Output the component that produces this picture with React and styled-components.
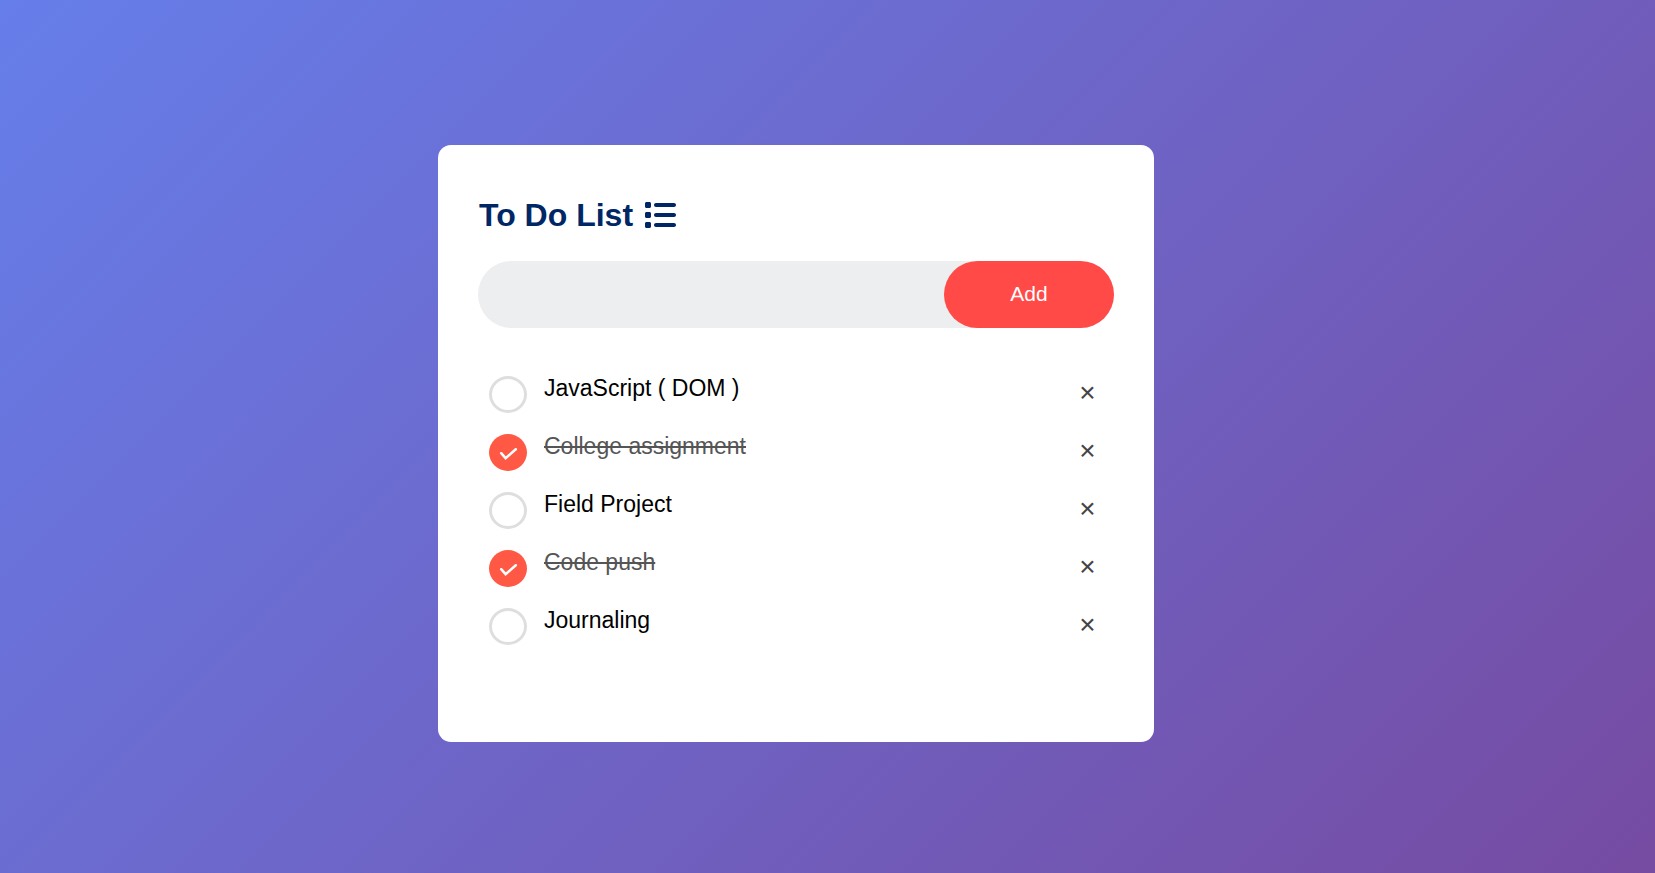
import React, { useState } from "react";
import styled, { createGlobalStyle } from "styled-components";
import { FaList } from "react-icons/fa6";

const GlobalStyle = createGlobalStyle`
  * {
    box-sizing: border-box;
  }
  body {
    margin: 0;
    font-family: Arial, "Liberation Sans", sans-serif;
  }
`;

const Page = styled.main`
  min-height: 100vh;
  padding: 145px 63px 120px 0;
  background: linear-gradient(135deg, #667eea, #764ba2);
`;

const Card = styled.section`
  width: 100%;
  max-width: 716px;
  margin: 0 auto;
  padding: 52px 40px 87px;
  background: #fff;
  border-radius: 13px;
`;

const Heading = styled.h1`
  display: flex;
  align-items: center;
  gap: 11px;
  margin: 0 0 28px;
  padding-left: 1px;
  color: #002765;
  font-size: 32px;
  line-height: 36px;
`;

const ListIcon = styled(FaList)`
  width: 32px;
  height: 32px;
`;

const AddForm = styled.form`
  display: flex;
  height: 67px;
  margin-bottom: 37px;
  background: #edeef0;
  border-radius: 40px;
`;

const TaskInput = styled.input`
  flex: 1;
  min-width: 0;
  padding: 0 27px;
  border: 0;
  outline: 0;
  background: transparent;
  font: inherit;
  font-size: 19px;
`;

const AddButton = styled.button`
  width: 170px;
  padding: 0 0 2px;
  border: 0;
  border-radius: 40px;
  background: #ff4a47;
  color: #fff;
  font: inherit;
  font-size: 21px;
  cursor: pointer;
`;

const TaskList = styled.ul`
  margin: 0;
  padding: 0;
  list-style: none;
`;

const TaskRow = styled.li`
  display: flex;
  align-items: center;
  height: 58px;
  padding: 0 11px;
`;

const TaskLabel = styled.label`
  display: flex;
  flex: 1;
  gap: 17px;
  cursor: pointer;
`;

const Tick = styled.span`
  display: grid;
  place-items: center;
  width: 38px;
  height: 37px;
  border: ${(p) => (p.$done ? "0" : "3px solid #dedede")};
  border-radius: 50%;
  background: ${(p) => (p.$done ? "#ff5945" : "#fff")};
`;

const TickBox = styled.input`
  appearance: none;
  width: 0;
  height: 0;
  margin: 0;
  grid-area: 1 / 1;
`;

const TickMark = styled.svg`
  grid-area: 1 / 1;
  width: 38px;
  height: 37px;
`;

const TaskText = styled.span`
  color: ${(p) => (p.$done ? "#555" : "#000")};
  font-size: 23px;
  line-height: 24px;
  text-decoration: ${(p) => (p.$done ? "line-through" : "none")};
`;

const RemoveButton = styled.button`
  width: 31px;
  height: 32px;
  padding: 0 0 2px;
  border: 0;
  background: transparent;
  color: #444;
  font: inherit;
  font-size: 28px;
  line-height: 30px;
  cursor: pointer;
`;

const initialTasks = [
  { id: 1, text: "JavaScript ( DOM )", done: false },
  { id: 2, text: "College assignment", done: true },
  { id: 3, text: "Field Project", done: false },
  { id: 4, text: "Code push", done: true },
  { id: 5, text: "Journaling", done: false },
];

function Task({ task, onToggle, onRemove }) {
  return (
    <TaskRow>
      <TaskLabel>
        <Tick $done={task.done}>
          <TickBox type="checkbox" checked={task.done} onChange={onToggle} />
          {task.done && (
            <TickMark viewBox="0 0 38 37" aria-hidden="true">
              <path
                d="M12.2 19.2L16.6 24.2L26.8 15.2"
                fill="none"
                stroke="#fff"
                strokeWidth="2.5"
                strokeLinecap="round"
              />
            </TickMark>
          )}
        </Tick>
        <TaskText $done={task.done}>{task.text}</TaskText>
      </TaskLabel>
      <RemoveButton type="button" aria-label={`Remove ${task.text}`} onClick={onRemove}>
        ×
      </RemoveButton>
    </TaskRow>
  );
}

export default function App() {
  const [tasks, setTasks] = useState(initialTasks);
  const [draft, setDraft] = useState("");

  const addTask = (event) => {
    event.preventDefault();
    if (!draft.trim()) return;
    setTasks([...tasks, { id: Date.now(), text: draft.trim(), done: false }]);
    setDraft("");
  };

  const toggle = (id) =>
    setTasks(tasks.map((t) => (t.id === id ? { ...t, done: !t.done } : t)));

  return (
    <>
      <GlobalStyle />
      <Page>
        <Card>
          <Heading>
            To Do List
            <ListIcon aria-hidden="true" />
          </Heading>
          <AddForm onSubmit={addTask}>
            <TaskInput
              type="text"
              aria-label="New task"
              value={draft}
              onChange={(e) => setDraft(e.target.value)}
            />
            <AddButton type="submit">Add</AddButton>
          </AddForm>
          <TaskList>
            {tasks.map((task) => (
              <Task
                key={task.id}
                task={task}
                onToggle={() => toggle(task.id)}
                onRemove={() => setTasks(tasks.filter((t) => t.id !== task.id))}
              />
            ))}
          </TaskList>
        </Card>
      </Page>
    </>
  );
}
